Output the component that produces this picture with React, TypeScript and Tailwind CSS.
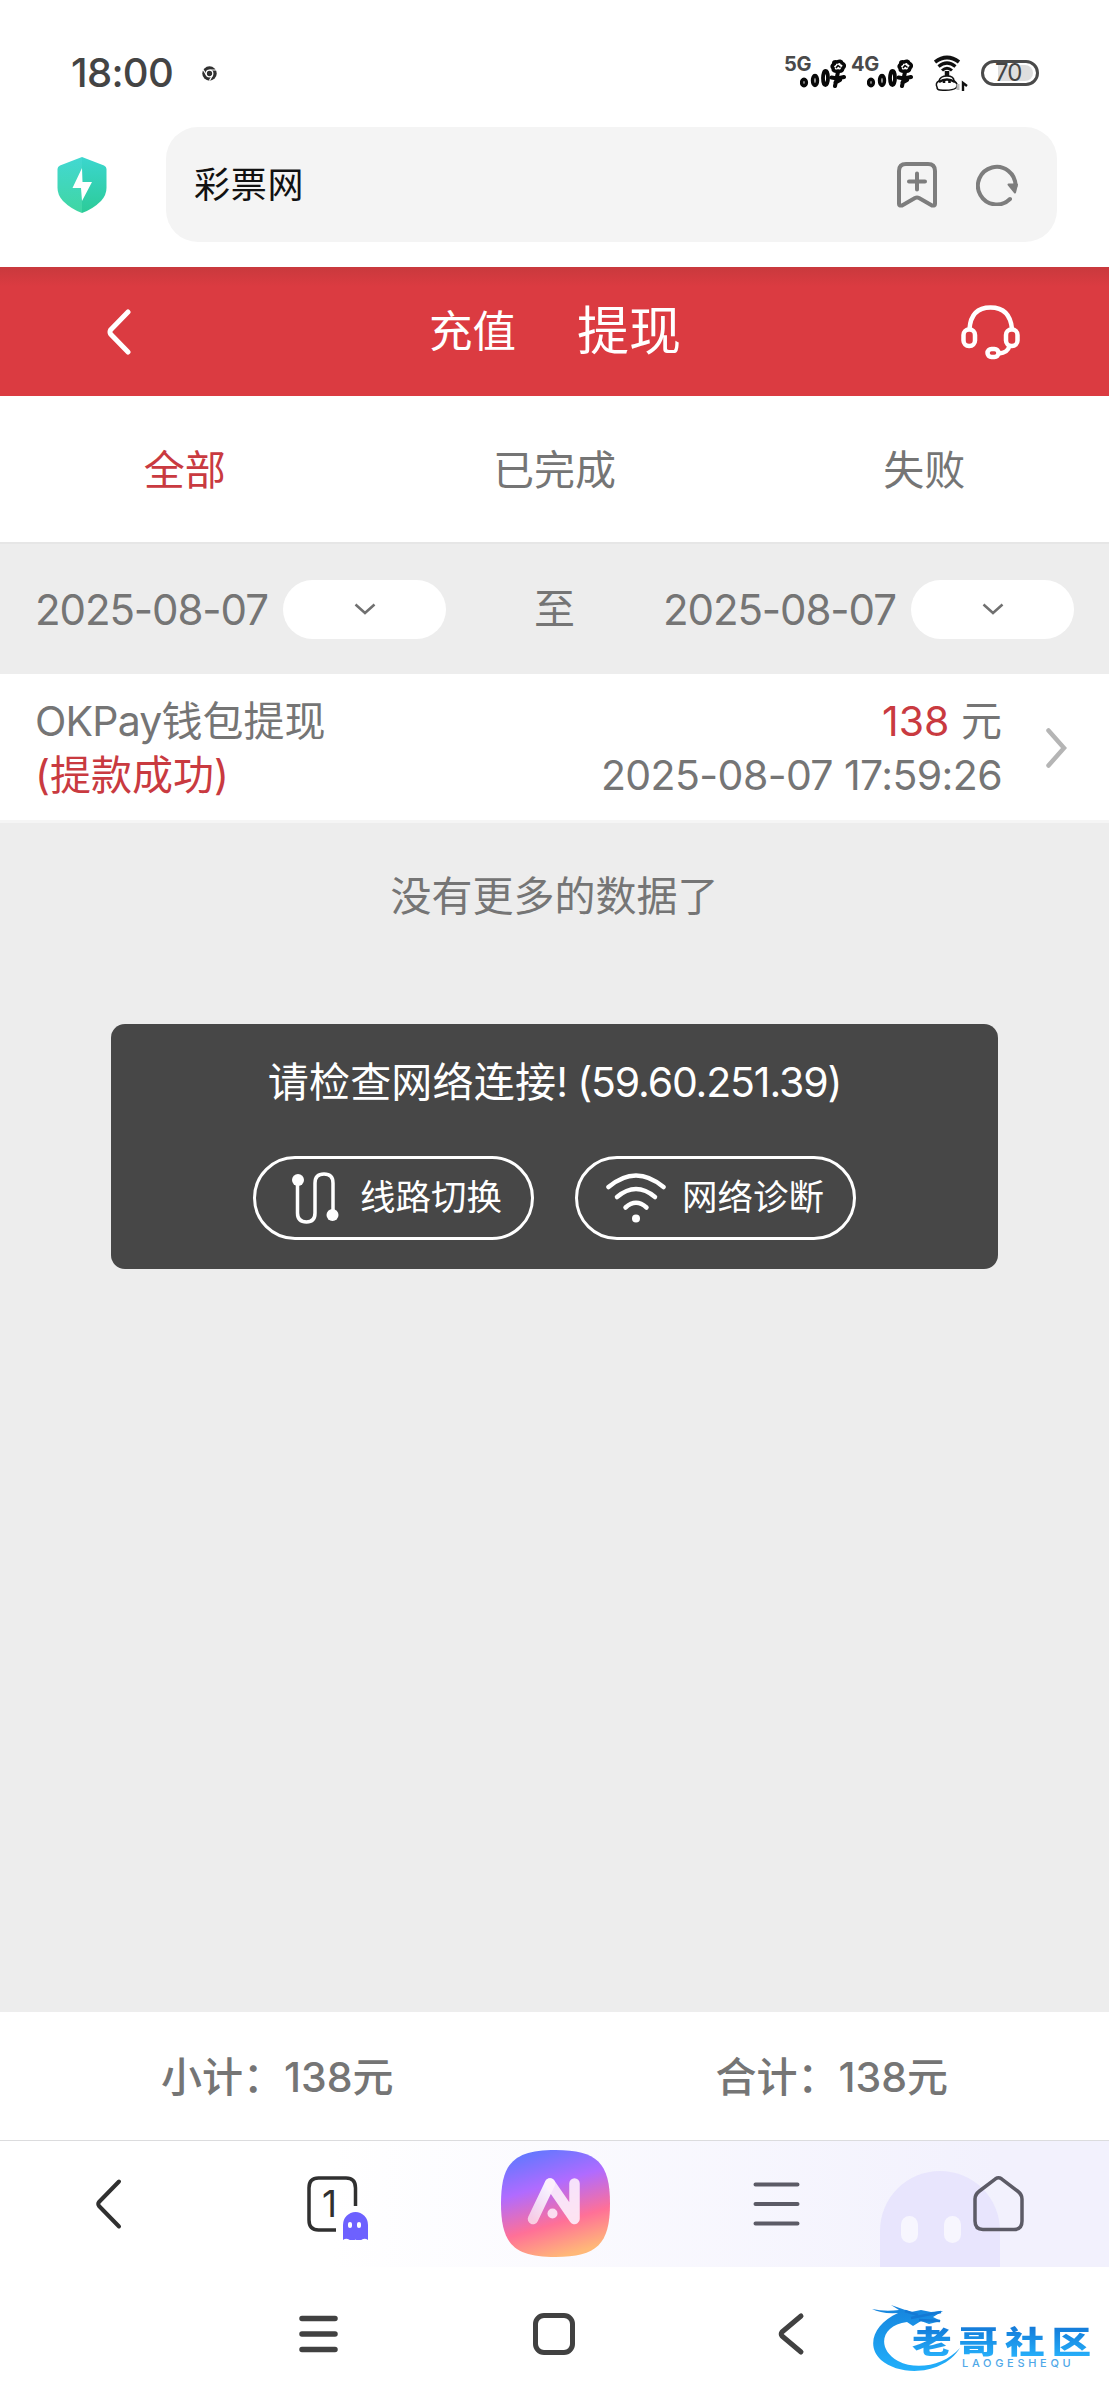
import type { ReactNode } from 'react';

const RECORD = { name: '钱包提现', status: '(提款成功)', amount: '138', time: '2025-08-07 17:59:26' };

function Signal({ label }: { label: string }) {
  return (
    <div className="flex w-[67px] items-start">
      <span className="w-[16px] text-[20px] leading-[20px] font-bold tracking-[-0.3px] text-[#4a4a4a]">{label}</span>
      <svg className="mt-[3px] h-[31px] w-[46px] shrink-0" viewBox="0 0 46 31" fill="none" stroke="#080808">
        <ellipse cx="4" cy="25.5" rx="2.3" ry="3.2" strokeWidth="3.6" />
        <ellipse cx="15" cy="23.5" rx="2.4" ry="5" strokeWidth="3.6" />
        <ellipse cx="25.500" cy="21" rx="2.5" ry="7" strokeWidth="3.8" />
        <path d="M34 7 Q33 4 37 5 Q41 3 42 6 Q46 8 43 11 Q42 15 38 14 Q33 15 33 11 Q31 9 34 7Z" strokeWidth="3.6" />
        <path d="M36 11 L38 8.500 L40.500 10.500" strokeWidth="1.6" />
        <path d="M38 15 L35 29 M31.500 20.500 L37 21.500 L44 20 M35.500 25.500 L40 23" strokeWidth="4" strokeLinecap="round" />
      </svg>
    </div>
  );
}

function StatusBar() {
  return (
    <div className="flex h-[127px] items-start">
      <div className="ml-[71px] mt-[53px] w-[131px] text-[40px] leading-[40px] font-medium tracking-[-0.7px] text-[#444]">18:00</div>
      <svg className="mt-[66px] size-[15px]" viewBox="0 0 15 15">
        <circle cx="7.5" cy="7.5" r="7.2" fill="#303030" />
        <circle cx="7.5" cy="7.5" r="3.3" fill="#303030" stroke="#fff" strokeWidth="1.3" />
        <path d="M7.500 4 H14 M4.500 9.300 L1.200 3.800 M10.500 9.300 L7.400 14.600" stroke="#fff" strokeWidth="1.2" />
      </svg>
      <div className="ml-auto mr-[70px] mt-[54px] flex items-start">
        <Signal label="5G" />
        <Signal label="4G" />
        <svg className="ml-[16px] mt-[1px] h-[38px] w-[34px]" viewBox="0 0 34 38" fill="none" stroke="#111">
          <path d="M1 7 Q13 -2 25 7" strokeWidth="3.8" />
          <path d="M4.500 11.500 Q13 4.500 21.500 11.500" strokeWidth="3.2" />
          <path d="M8 15.500 Q13 11 18 15.500" strokeWidth="3" />
          <path d="M13 16 V22" strokeWidth="4.5" />
          <path d="M3 32 Q1 28 5 26 Q6 21 13 21 Q20 21 20 26 Q25 29 22 33 Q18 36 6 35 Q3 35 3 32Z" strokeWidth="1.5" fill="#fff" />
          <path d="M5 27 Q13 22 21 27" strokeWidth="2.5" />
          <path d="M10 24 V28 M15.500 24 V28" strokeWidth="2.6" />
          <path d="M24 29 V35" stroke="#bbb" strokeWidth="3" />
          <path d="M29 36 V28 L33 31" strokeWidth="2.4" />
        </svg>
        <div className="ml-[13px] mt-[6px] flex h-[26px] w-[58px] items-center rounded-full border-[3px] border-[#4a4a4a] bg-white p-[2px]">
          <div className="flex h-full w-[47px] items-center rounded-full bg-linear-to-r from-white from-25% to-[#dedede] to-25% pl-[9px] text-[24px] leading-none tracking-[-1px] text-[#444]">70</div>
        </div>
      </div>
    </div>
  );
}

function AddressBar() {
  return (
    <div className="flex h-[140px] items-start">
      <svg className="ml-[57px] mt-[30px] h-[56px] w-[50px]" viewBox="0 0 50 56">
        <defs>
          <linearGradient id="shieldL" x1="0" y1="0" x2="0" y2="1">
            <stop offset="0" stopColor="#42d8d2" />
            <stop offset="1" stopColor="#40d6a2" />
          </linearGradient>
          <linearGradient id="shieldR" x1="0" y1="0" x2="0" y2="1">
            <stop offset="0" stopColor="#3bd6ce" />
            <stop offset="1" stopColor="#2ccb98" />
          </linearGradient>
        </defs>
        <path d="M25 0 L47 8.500 Q49.500 9.500 49.500 12 V31 Q49.500 38 44 44 Q36 52 25 56Z" fill="url(#shieldR)" />
        <path d="M25 0 L3 8.500 Q.5 9.500 .5 12 V31 Q.5 38 6 44 Q14 52 25 56Z" fill="url(#shieldL)" />
        <path d="M25 11 L15.500 31 H24 L25 44 L35 25 H25.500Z" fill="#fff" />
      </svg>
      <div className="ml-[59px] flex h-[115px] w-[891px] items-center rounded-[32px] bg-[#f4f4f4]">
        <span className="ml-[28px] text-[36px] leading-none tracking-[0.8px] text-[#111]">彩票网</span>
        <svg className="ml-auto h-[46px] w-[40px]" viewBox="0 0 40 46" fill="none" stroke="#7d7d7d" strokeWidth="4" strokeLinecap="round" strokeLinejoin="round">
          <path d="M9 2 H31 Q38 2 38 9 V42 Q38 44 35 43.500 L22 36 Q20 35 18 36 L5 43.500 Q2 44 2 42 V9 Q2 2 9 2Z" />
          <path d="M12 19.500 H28 M20 11.500 V27.500" />
        </svg>
        <svg className="ml-[39px] mr-[39px] size-[42px]" viewBox="0 0 42 42" fill="none" stroke="#7d7d7d" strokeWidth="4">
          <path d="M34 35 A18.800 18.800 0 1 1 39.500 22" strokeLinecap="round" />
          <path d="M32.500 20.500 L41 20.500 L39 28.500Z" fill="#7d7d7d" strokeWidth="2" strokeLinejoin="round" />
        </svg>
      </div>
    </div>
  );
}

function PageHeader() {
  return (
    <header className="flex h-[129px] items-center bg-[#db3b41] bg-linear-to-b from-[#c9393d] to-[#db3b41] to-15% text-white">
      <svg className="ml-[107px] h-[46px] w-[24px]" viewBox="0 0 24 46" fill="none" stroke="#fff" strokeWidth="5" strokeLinecap="round" strokeLinejoin="round">
        <path d="M21 3 L3.500 21 Q2.500 23 3.500 25 L21 43" />
      </svg>
      <span className="ml-[298px] text-[43.5px] leading-none">充值</span>
      <span className="ml-[61px] text-[52px] leading-none">提现</span>
      <svg className="ml-auto mr-[88px] h-[56px] w-[60px]" viewBox="0 0 60 56" fill="none" stroke="#fff" strokeWidth="4.5">
        <path d="M8.500 25 Q10 3.500 29.500 3.500 Q49 3.500 51 25" />
        <rect x="2.5" y="25.5" width="11.500" height="16.500" rx="5.500" />
        <rect x="45" y="25.5" width="11.500" height="16.500" rx="5.500" />
        <path d="M48.500 42 Q46.500 49 38 49.500" />
        <rect x="26.5" y="45" width="11" height="8" rx="4" />
      </svg>
    </header>
  );
}

function DateField({ value }: { value: string }) {
  return (
    <div className="flex items-center">
      <span className="w-[248px] pt-[2px] text-[42px] leading-none tracking-[-1.1px]">{value}</span>
      <div className="flex h-[59px] w-[163px] items-center justify-center rounded-full bg-white">
        <svg className="h-[12px] w-[22px]" viewBox="0 0 22 12" fill="none" stroke="#707070" strokeWidth="2.5">
          <path d="M1.500 1.500 L11 10 L20.500 1.500" />
        </svg>
      </div>
    </div>
  );
}

function ToastButton({ icon, label }: { icon: ReactNode; label: string }) {
  return (
    <div className="flex h-[84px] w-[281px] items-center rounded-full border-3 border-white pl-[28px]">
      <div className="w-[76px]">{icon}</div>
      <span className="text-[35.5px] leading-none whitespace-nowrap">{label}</span>
    </div>
  );
}

function NetworkToast() {
  return (
    <div className="mx-auto mt-[107px] h-[245px] w-[887px] rounded-[14px] bg-[#474747] text-white">
      <div className="pt-[37px] text-center text-[41px] leading-[42px] tracking-[0.2px] whitespace-nowrap">
        请检查网络连接<span className="tracking-[-1.15px]">! (59.60.251.39)</span>
      </div>
      <div className="mt-[53px] flex justify-center gap-[41px]">
        <ToastButton
          label="线路切换"
          icon={
            <svg className="ml-[8px] h-[52px] w-[48px]" viewBox="0 0 48 52" fill="none" stroke="#fff" strokeWidth="3.5">
              <path d="M5.500 8 V41 Q5.500 50 14.500 50 Q23 50 23 41 V11 Q23 2 32 2 Q41 2 41 11 V43" />
              <circle cx="6" cy="8" r="6" fill="#fff" stroke="none" />
              <circle cx="40.500" cy="43" r="6" fill="#fff" stroke="none" />
            </svg>
          }
        />
        <ToastButton
          label="网络诊断"
          icon={
            <svg className="h-[52px] w-[60px]" viewBox="0 0 60 52" fill="none" stroke="#fff" strokeWidth="4.5" strokeLinecap="round">
              <path d="M2.500 15 Q30 -8 57.500 15" />
              <path d="M11 25 Q30 9 49 25" />
              <path d="M19.500 35.500 Q30 26 40.500 35.500" />
              <circle cx="30" cy="46.5" r="4" fill="#fff" stroke="none" />
            </svg>
          }
        />
      </div>
    </div>
  );
}

function AiLogo() {
  return (
    <svg className="mb-[2px] ml-[132px] h-[107px] w-[109px]" viewBox="0 0 109 107">
      <defs>
        <linearGradient id="aiBg" x1=".25" y1="0" x2=".55" y2="1">
          <stop offset="0" stopColor="#5f78ff" />
          <stop offset=".35" stopColor="#b06bff" />
          <stop offset=".7" stopColor="#ff7097" />
          <stop offset="1" stopColor="#ffb878" />
        </linearGradient>
        <linearGradient id="aiLeg" x1="0" y1="1" x2=".6" y2="0">
          <stop offset="0" stopColor="#fff" stopOpacity=".65" />
          <stop offset="1" stopColor="#fff" stopOpacity=".9" />
        </linearGradient>
      </defs>
      <path d="M54.500 0 C96 0 109 13 109 53.500 C109 94 96 107 54.500 107 C13 107 0 94 0 53.500 C0 13 13 0 54.500 0Z" fill="url(#aiBg)" />
      <path d="M32 69 L49 33.500" stroke="url(#aiLeg)" strokeWidth="10.5" strokeLinecap="round" />
      <path d="M49 33.500 L73.500 69 V33.500" fill="none" stroke="#fdeffc" strokeOpacity=".9" strokeWidth="10.5" strokeLinecap="round" strokeLinejoin="round" />
      <circle cx="51.5" cy="63.5" r="5" fill="#fbdcf0" />
    </svg>
  );
}

function BrowserToolbar() {
  return (
    <div className="relative flex h-[127px] items-center border-t border-[#dcdcde] bg-linear-to-r from-white from-30% to-[#f2f1fd] to-90%">
      <svg className="absolute right-[109px] bottom-0 h-[96px] w-[120px]" viewBox="0 0 120 96">
        <path d="M0 96 V60 A60 60 0 0 1 120 60 V96Z" fill="#e8e5fd" />
        <rect x="21" y="45" width="17" height="27" rx="8.5" fill="#f7f6fe" />
        <rect x="64" y="45" width="17" height="27" rx="8.5" fill="#f7f6fe" />
      </svg>
      <svg className="ml-[95px] h-[52px] w-[27px]" viewBox="0 0 27 52" fill="none" stroke="#303030" strokeWidth="4" strokeLinecap="round" strokeLinejoin="round">
        <path d="M24 3.500 L4 24 Q2.500 26 4 28 L24 48.500" />
      </svg>
      <div className="relative mb-[3px] ml-[185px] h-[54px] w-[62px]">
        <svg className="h-[64px] w-[62px]" viewBox="0 0 62 64" fill="none">
          <path d="M48.500 30 V12 Q48.500 2 39 2 H11.500 Q2 2 2 12 V44 Q2 54 11.500 54 H29" stroke="#303030" strokeWidth="3.5" />
          <path d="M36 64 V49 A12.500 13 0 0 1 61 49 V64 Q58 62 55 63.500 Q52 66 48.500 63.500 Q45 66 42 63.500 Q39 62 36 64Z" fill="#6d61ff" />
          <rect x="41" y="46" width="4" height="6" rx="2" fill="#fff" />
          <rect x="50" y="46" width="4" height="6" rx="2" fill="#fff" />
        </svg>
        <span className="absolute top-[9px] left-[15px] text-[37px] leading-[38px] text-[#303030]">1</span>
      </div>
      <AiLogo />
      <svg className="mb-[1px] ml-[143px] h-[44px] w-[47px]" viewBox="0 0 47 44" stroke="#5c5b66" strokeWidth="4" strokeLinecap="round">
        <path d="M2.500 2.500 H44.500 M2.500 22 H44.500 M2.500 41.500 H44.500" />
      </svg>
      <svg className="relative mb-[1px] ml-[173px] h-[56px] w-[51px]" viewBox="0 0 51 56" fill="none" stroke="#5c5b66" strokeWidth="3.5" strokeLinejoin="round">
        <path d="M22.500 2.800 Q25.500 .8 28.500 2.800 L44.500 15 Q49 18.500 49 23 V45 Q49 53.500 41 53.500 H10 Q2 53.500 2 45 V23 Q2 18.500 6.500 15Z" />
      </svg>
    </div>
  );
}

function SiteLogo() {
  return (
    <div className="relative ml-[66px] h-[76px] w-[230px]">
      <svg className="absolute top-[7px] left-0 h-[72px] w-[92px]" viewBox="0 0 92 72">
        <defs>
          <linearGradient id="dragon" x1="0" y1="0" x2="0" y2="1">
            <stop offset="0" stopColor="#1683dc" />
            <stop offset="1" stopColor="#22b0fb" />
          </linearGradient>
        </defs>
        <path d="M27 10 C4 20 -6 42 10 57 C30 74 72 72 89 45 C74 62 46 68 27 58 C5 46 10 22 36 19 L42 23 L50 18 L58 21 L70 18 L62 14 L72 8 L60 9 L50 7 L40 9 L20 2 L28 7 Q14 9 1 6 Q10 11 27 10Z" fill="url(#dragon)" />
        <path d="M34 8 L47 12 M40 15 L70 9 M48 17 L69 18" stroke="#1479d4" strokeWidth="2.5" />
      </svg>
      <span className="absolute top-[30px] left-[41px] origin-left scale-x-128 bg-linear-to-b from-[#1479d8] to-[#27b0fa] bg-clip-text text-[31px] leading-[31px] font-black tracking-[5.3px] whitespace-nowrap text-transparent">老哥社区</span>
      <span className="absolute top-[61px] left-[91px] text-[11px] leading-[12px] font-medium tracking-[3.7px] text-[#4fa8e8]">LAOGESHEQU</span>
    </div>
  );
}

function SystemNav() {
  return (
    <div className="flex h-[133px] items-center bg-white">
      <svg className="ml-[299px] h-[40px] w-[40px]" viewBox="0 0 40 40" stroke="#414141" strokeWidth="5.5" strokeLinecap="round">
        <path d="M3 4.500 H36 M3 20 H36 M3 35.500 H36" />
      </svg>
      <div className="ml-[194px] size-[42px] rounded-[11px] border-[5px] border-[#414141]" />
      <svg className="ml-[202px] h-[44px] w-[28px]" viewBox="0 0 28 44" fill="none" stroke="#414141" strokeWidth="5" strokeLinecap="round" strokeLinejoin="round">
        <path d="M24 4 L5 20 Q3.500 22 5 24 L24 40" />
      </svg>
      <SiteLogo />
    </div>
  );
}

export default function App() {
  return (
    <div className="flex h-[2400px] w-[1109px] flex-col overflow-hidden bg-white font-[Inter,'Noto_Sans_CJK_SC',sans-serif] text-[#757575]">
      <StatusBar />
      <AddressBar />
      <PageHeader />
      <nav className="grid h-[148px] grid-cols-3 place-items-center border-b-2 border-[#e6e6e6] pt-[2px] text-[41px] leading-none">
        <span className="text-[#c93a40]">全部</span>
        <span>已完成</span>
        <span>失败</span>
      </nav>
      <main className="flex grow flex-col bg-[#ededed]">
        <div className="flex h-[130px] items-center justify-between px-[35px]">
          <DateField value="2025-08-07" />
          <span className="text-[41px] leading-none">至</span>
          <DateField value="2025-08-07" />
        </div>
        <div className="flex h-[149px] items-center border-b-3 border-[#f5f5f5] bg-white pt-[2px] pl-[35px] text-[41px] leading-[54px]">
          <div>
            <p><span className="tracking-[-0.8px]">OKPay</span>{RECORD.name}</p>
            <p className="text-[#c93a40]">{RECORD.status}</p>
          </div>
          <div className="ml-auto text-right">
            <p><span className="text-[#c93a40]">{RECORD.amount}</span> 元</p>
            <p className="tracking-[-0.6px]">{RECORD.time}</p>
          </div>
          <svg className="mr-[42px] ml-[44px] h-[40px] w-[21px]" viewBox="0 0 21 40" fill="none" stroke="#b5b5b5" strokeWidth="4.5" strokeLinecap="round">
            <path d="M2.500 2.500 L18 20 L2.500 37.500" />
          </svg>
        </div>
        <p className="mt-[53px] text-center text-[41px] leading-[41px]">没有更多的数据了</p>
        <NetworkToast />
      </main>
      <div className="grid h-[128px] grid-cols-2 place-items-center pt-[2px] text-[41px] leading-none font-medium">
        <span>小计：138元</span>
        <span>合计：138元</span>
      </div>
      <BrowserToolbar />
      <SystemNav />
    </div>
  );
}
